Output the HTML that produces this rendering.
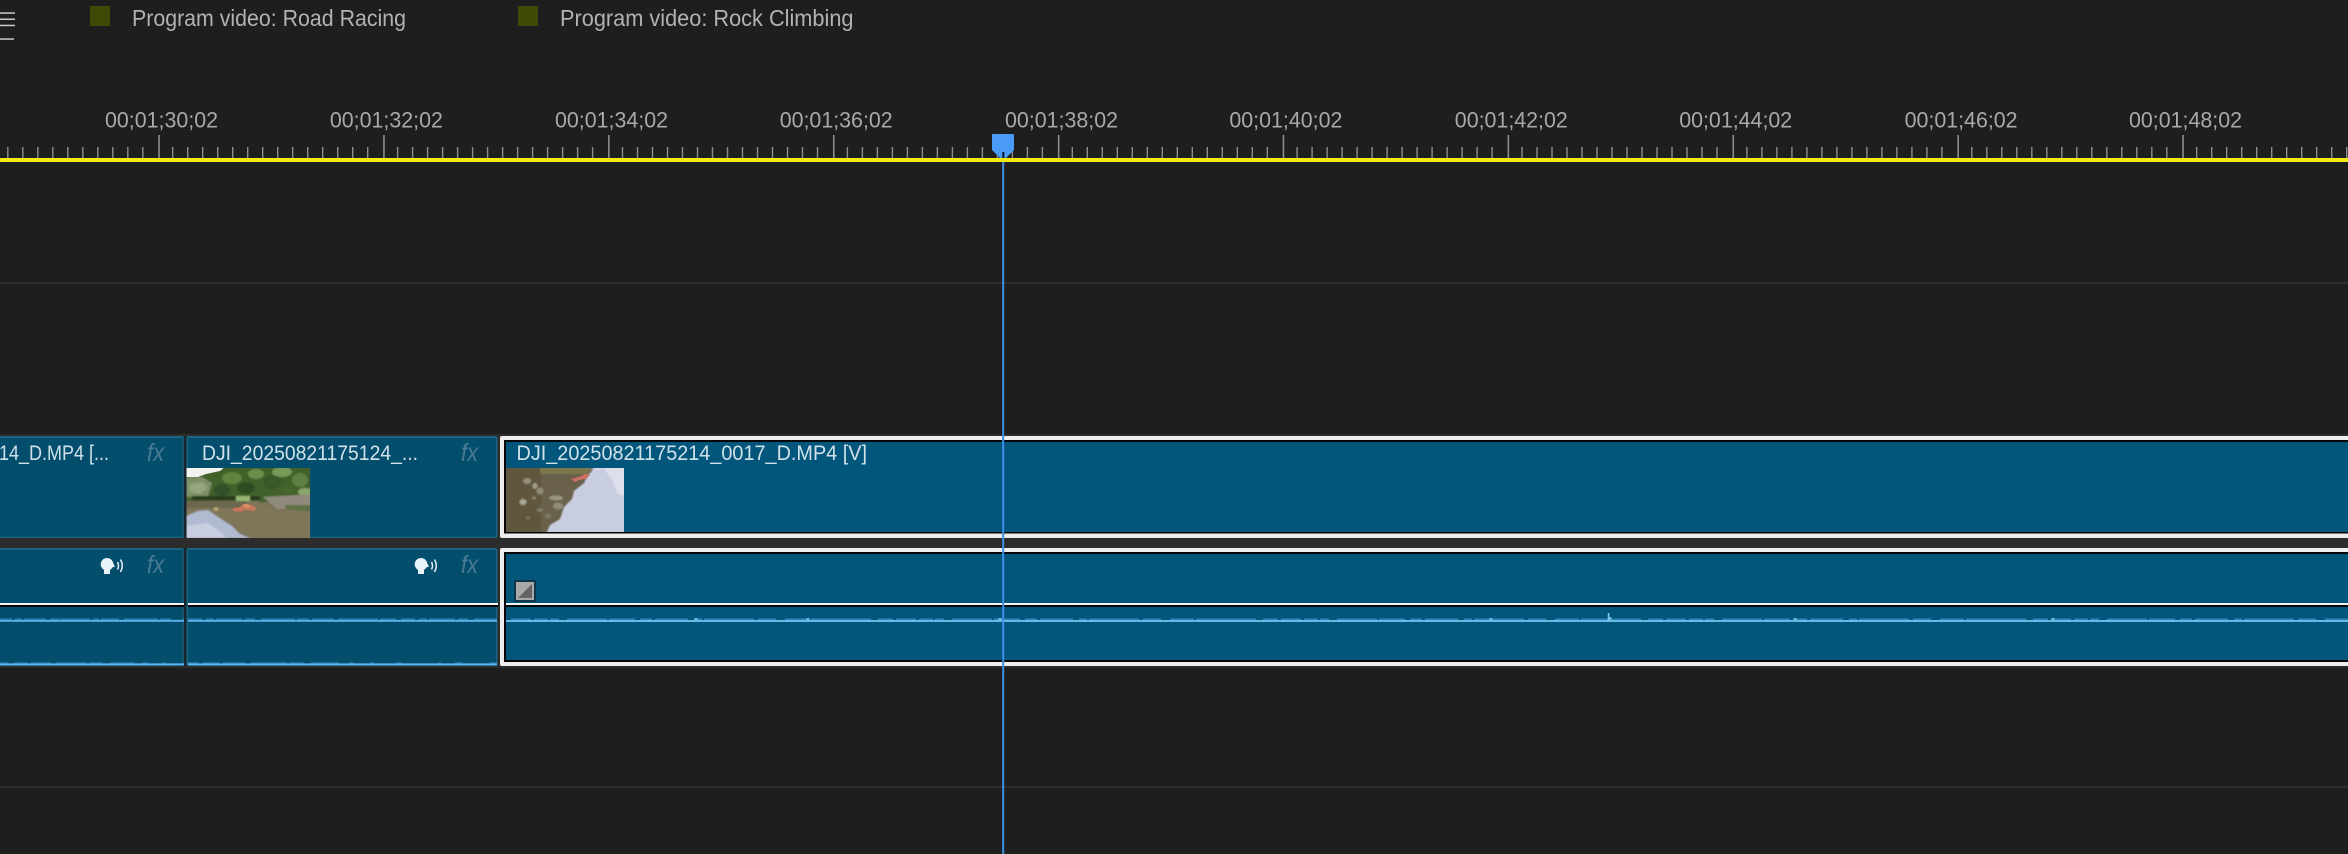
<!DOCTYPE html>
<html lang="en">
<head>
<meta charset="utf-8">
<title>Timeline</title>
<style>
html,body{margin:0;padding:0;background:#1e1e1e;width:2348px;height:854px;overflow:hidden}
svg{display:block}
text{font-family:"Liberation Sans",sans-serif}
.ruler{font-size:22px;fill:#a9a9a9}
.tab{font-size:23px;fill:#b2b2b2}
.clip{font-size:21px;fill:#d0e1ea}
.fx{font-style:italic;font-size:25px;fill:#4a7b93}
</style>
</head>
<body>
<svg width="2348" height="854" viewBox="0 0 2348 854" xmlns="http://www.w3.org/2000/svg">
<defs>
<g id="ticks" fill="#8d8d8d">
<rect x="-.75" y="135" width="1.600" height="23"/>
<rect x="13" y="147" width="1.400" height="11"/><rect x="28" y="147" width="1.400" height="11"/>
<rect x="43" y="147" width="1.400" height="11"/><rect x="58" y="147" width="1.400" height="11"/>
<rect x="73" y="147" width="1.400" height="11"/><rect x="88" y="147" width="1.400" height="11"/>
<rect x="103" y="147" width="1.400" height="11"/><rect x="118" y="147" width="1.400" height="11"/>
<rect x="133" y="147" width="1.400" height="11"/><rect x="148" y="147" width="1.400" height="11"/>
<rect x="163" y="147" width="1.400" height="11"/><rect x="178" y="147" width="1.400" height="11"/>
<rect x="193" y="147" width="1.400" height="11"/><rect x="208" y="147" width="1.400" height="11"/>
</g>
<g id="speaker">
<circle cx="6.500" cy="6.300" r="6.300" fill="#e8f3f7"/>
<path d="M3.500 10h6v6h-6zM12 4l2.500 4.500-3 1z" fill="#e8f3f7"/>
<path d="M17 4q2 3.800 0 7.500M20 1.500q3.600 6.200 0 12.500" fill="none" stroke="#e8f3f7" stroke-width="1.500"/>
</g>
<filter id="b1" x="-5%" y="-5%" width="110%" height="110%"><feGaussianBlur stdDeviation=".9"/></filter>
<clipPath id="t1"><rect x="186.500" y="468" width="123.500" height="70"/></clipPath>
<clipPath id="t2"><rect x="506" y="468" width="118" height="64"/></clipPath>
</defs>

<rect width="2348" height="854" fill="#1e1e1e"/>

<!-- top left menu -->
<rect x="0" y="12.300" width="15" height="1.500" fill="#c9c9c9"/>
<rect x="0" y="18.500" width="15" height="1.500" fill="#c9c9c9"/>
<rect x="0" y="24.700" width="15" height="1.500" fill="#c9c9c9"/>
<rect x="0" y="38.300" width="14" height="1.500" fill="#c9c9c9"/>

<!-- sequence tabs -->
<rect x="90" y="6" width="20" height="20" fill="#404a04"/>
<text class="tab" x="132" y="26" textLength="274" lengthAdjust="spacingAndGlyphs">Program video: Road Racing</text>
<rect x="518" y="6" width="20" height="20" fill="#404a04"/>
<text class="tab" x="560" y="26" textLength="293.500" lengthAdjust="spacingAndGlyphs">Program video: Rock Climbing</text>

<!-- ruler -->
<use href="#ticks" x="-65.900"/>
<use href="#ticks" x="159"/><use href="#ticks" x="383.900"/><use href="#ticks" x="608.800"/>
<use href="#ticks" x="833.700"/><use href="#ticks" x="1058.600"/><use href="#ticks" x="1283.400"/>
<use href="#ticks" x="1508.300"/><use href="#ticks" x="1733.200"/><use href="#ticks" x="1958.100"/>
<use href="#ticks" x="2183"/>

<text class="ruler" x="105" y="127.500" textLength="113" lengthAdjust="spacingAndGlyphs">00;01;30;02</text>
<text class="ruler" x="329.900" y="127.500" textLength="113" lengthAdjust="spacingAndGlyphs">00;01;32;02</text>
<text class="ruler" x="555" y="127.500" textLength="113" lengthAdjust="spacingAndGlyphs">00;01;34;02</text>
<text class="ruler" x="779.700" y="127.500" textLength="113" lengthAdjust="spacingAndGlyphs">00;01;36;02</text>
<text class="ruler" x="1005" y="127.500" textLength="113" lengthAdjust="spacingAndGlyphs">00;01;38;02</text>
<text class="ruler" x="1229.400" y="127.500" textLength="113" lengthAdjust="spacingAndGlyphs">00;01;40;02</text>
<text class="ruler" x="1454.800" y="127.500" textLength="113" lengthAdjust="spacingAndGlyphs">00;01;42;02</text>
<text class="ruler" x="1679.200" y="127.500" textLength="113" lengthAdjust="spacingAndGlyphs">00;01;44;02</text>
<text class="ruler" x="1904.600" y="127.500" textLength="113" lengthAdjust="spacingAndGlyphs">00;01;46;02</text>
<text class="ruler" x="2129" y="127.500" textLength="113" lengthAdjust="spacingAndGlyphs">00;01;48;02</text>

<!-- playhead head -->
<path d="M993 134h20a1 1 0 0 1 1 1v15l-8 8v2h-6v-2l-8-8v-15a1 1 0 0 1 1-1z" fill="#4a9bf6"/>
<rect x="1002.300" y="152" width="2" height="7" fill="#0c1420"/>
<!-- yellow work bar -->
<rect x="0" y="158" width="2348" height="4" fill="#f3ea10"/>

<!-- track separators -->
<rect x="0" y="282" width="2348" height="2" fill="#2e2e2e"/>
<rect x="0" y="786" width="2348" height="2" fill="#2e2e2e"/>

<!-- clip band -->
<rect x="0" y="434" width="2348" height="234" fill="#2c2c2c"/>

<!-- clip 1 video/audio -->
<rect x="-6" y="436" width="190" height="102" rx="2" fill="#1c6580"/>
<rect x="-6" y="438" width="188.500" height="98.500" fill="#034e6d"/>
<rect x="-6" y="548" width="190" height="118" rx="2" fill="#1c6580"/>
<rect x="-6" y="550" width="188.500" height="114.500" fill="#034e6d"/>
<rect x="183.700" y="436" width="3" height="102" fill="#16252d"/>
<rect x="183.700" y="548" width="3" height="118" fill="#16252d"/>

<!-- clip 2 video/audio -->
<rect x="186.500" y="436" width="311" height="102" rx="2" fill="#1c6580"/>
<rect x="188" y="438" width="308" height="98.500" fill="#034e6d"/>
<rect x="186.500" y="548" width="311" height="118" rx="2" fill="#1c6580"/>
<rect x="188" y="550" width="308" height="114.500" fill="#034e6d"/>

<!-- clip 3 selected -->
<rect x="500" y="436" width="1860" height="102" rx="2" fill="#eeeeee"/>
<rect x="504" y="440" width="1850" height="93.500" fill="#060606"/>
<rect x="506" y="442" width="1850" height="90" fill="#02567c"/>
<rect x="500" y="548" width="1860" height="118" rx="2" fill="#eeeeee"/>
<rect x="504" y="552" width="1850" height="110" fill="#060606"/>
<rect x="506" y="554" width="1850" height="106" fill="#02567c"/>

<!-- thumbnail clip 2 -->
<g clip-path="url(#t1)">
<rect x="186" y="468" width="125" height="70" fill="#7b7258"/>
<g filter="url(#b1)">
<rect x="180" y="466" width="135" height="36" fill="#43612c"/>
<path d="M180 477h22l10 6-4 14h-28z" fill="#7d8f66"/>
<path d="M190 484l12-2 6 6-8 6-10-2z" fill="#96a57c"/>
<ellipse cx="232" cy="478" rx="10" ry="6" fill="#5f8440"/>
<ellipse cx="222" cy="490" rx="8" ry="6" fill="#32502a"/>
<ellipse cx="246" cy="488" rx="9" ry="6" fill="#2f4d20"/>
<ellipse cx="256" cy="474" rx="8" ry="5" fill="#6b8f4b"/>
<ellipse cx="272" cy="482" rx="9" ry="7" fill="#37582a"/>
<ellipse cx="282" cy="472" rx="10" ry="5" fill="#799a58"/>
<ellipse cx="300" cy="480" rx="8" ry="7" fill="#5f8042"/>
<ellipse cx="305" cy="492" rx="7" ry="4" fill="#88a56c"/>
<ellipse cx="288" cy="490" rx="7" ry="4" fill="#46662f"/>
<rect x="192" y="496" width="68" height="4" fill="#2a3a1c"/>
<path d="M263 497l50-3v13l-36 2z" fill="#8f8a7b"/>
<path d="M285 505h30v6h-28z" fill="#5f7245"/>
<rect x="236" y="496" width="14" height="6" fill="#95b672"/>
<path d="M186 501h72l10 7 46 4v28H186z" fill="#7f7559"/>
<path d="M186 501h60v7h-60z" fill="#6c674e"/>
<path d="M186 538v-22l12-5 10-1 10 7 14 9 8 8 10 4z" fill="#b0bad0"/>
<path d="M186 538v-12l22-3 14 10 4 5z" fill="#c9cfe0"/>
<ellipse cx="216" cy="509" rx="2.500" ry="1.800" fill="#c0b070"/>
</g>
<path d="M180 466h46l-6 5-14 3-8 3h-18z" fill="#f3f4ef"/>
<path d="M233 508l7-1 4-3 8 1 5 3-3 3-8-1-6 2-7-1z" fill="#c5775c"/>
<path d="M241 505l6-1 4 2-4 2z" fill="#dd8f63"/>
</g>

<!-- thumbnail clip 3 -->
<g clip-path="url(#t2)">
<rect x="506" y="468" width="118" height="64" fill="#6a614a"/>
<g filter="url(#b1)">
<rect x="506" y="468" width="35" height="64" fill="#5f563e"/>
<path d="M540 466h55l-8 8h-47z" fill="#7b784e"/>
<path d="M594 466h32v68h-80l4-9 10-6 4-12 8-8 2-8 10-8 4-8 4-4z" fill="#c9cde0"/>
<path d="M592 470l12-2 8 12 6 14 8 2v-30h-26z" fill="#dde0ec"/>
<ellipse cx="527" cy="481" rx="4" ry="3" fill="#948f7c"/>
<ellipse cx="535" cy="486" rx="2.500" ry="3" fill="#a09c8a"/>
<ellipse cx="540" cy="491" rx="3.500" ry="3.500" fill="#8f8a76"/>
<ellipse cx="523" cy="502" rx="3.500" ry="3" fill="#aaa799"/>
<ellipse cx="534" cy="498" rx="2" ry="1.500" fill="#8d8875"/>
<ellipse cx="556" cy="498" rx="7" ry="2.500" fill="#9b9783"/>
<ellipse cx="558" cy="506" rx="5" ry="3.500" fill="#918d7a"/>
<ellipse cx="540" cy="510" rx="3" ry="2" fill="#827d68"/>
<ellipse cx="548" cy="516" rx="3" ry="2" fill="#827d68"/>
<ellipse cx="528" cy="518" rx="2" ry="1.500" fill="#7d7864"/>
</g>
<path d="M571 479l8-2 6-3 5 1-4 4-7 1-4 2z" fill="#cf6f62"/>
</g>

<!-- clip labels -->
<text class="clip" x="-1" y="460" textLength="110" lengthAdjust="spacingAndGlyphs">14_D.MP4 [...</text>
<text class="clip" x="202" y="460" textLength="216" lengthAdjust="spacingAndGlyphs">DJI_20250821175124_...</text>
<text class="clip" x="516.500" y="460" textLength="350.500" lengthAdjust="spacingAndGlyphs">DJI_20250821175214_0017_D.MP4 [V]</text>

<!-- fx -->
<text class="fx" x="147" y="461" textLength="17" lengthAdjust="spacingAndGlyphs">fx</text>
<text class="fx" x="461" y="461" textLength="17" lengthAdjust="spacingAndGlyphs">fx</text>
<text class="fx" x="147" y="573" textLength="17" lengthAdjust="spacingAndGlyphs">fx</text>
<text class="fx" x="461" y="573" textLength="17" lengthAdjust="spacingAndGlyphs">fx</text>

<!-- speaker icons -->
<use href="#speaker" x="100.500" y="558"/>
<use href="#speaker" x="414.500" y="558"/>

<!-- keyframe icon -->
<rect x="514" y="580" width="22" height="22" rx="2" fill="#123649"/>
<rect x="516" y="582" width="18" height="18" fill="#a9a9a9"/>
<path d="M518 598h14v-14z" fill="#646464"/>

<!-- audio divider -->
<rect x="0" y="603" width="184" height="2" fill="#f2f2f2"/><rect x="0" y="605" width="184" height="2" fill="#050505"/>
<rect x="188" y="603" width="310" height="2" fill="#f2f2f2"/><rect x="188" y="605" width="310" height="2" fill="#050505"/>
<rect x="506" y="603" width="1842" height="2" fill="#f2f2f2"/><rect x="506" y="605" width="1842" height="2" fill="#050505"/>

<!-- waveforms: unselected -->
<g fill="none">
<line x1="0" y1="619" x2="184" y2="619" stroke="#2a7aa8" stroke-width="1.500" stroke-dasharray="12 3 7 2 22 4 9 1 30 3 6 2 18 5 34 2 11"/>
<line x1="0" y1="620.800" x2="184" y2="620.800" stroke="#5cb5ee" stroke-width="1.800"/>
<line x1="188" y1="619" x2="497" y2="619" stroke="#2a7aa8" stroke-width="1.500" stroke-dasharray="14 4 8 2 26 3 10 6 34 2 12 3 22 4 40 2 16 5"/>
<line x1="188" y1="620.800" x2="497" y2="620.800" stroke="#5cb5ee" stroke-width="1.800"/>
<line x1="0" y1="662.800" x2="184" y2="662.800" stroke="#2a7aa8" stroke-width="1.200" stroke-dasharray="8 6 14 3 20 5 30 4 12 8 24"/>
<line x1="0" y1="664.300" x2="184" y2="664.300" stroke="#5cb5ee" stroke-width="1.800"/>
<line x1="188" y1="662.800" x2="497" y2="662.800" stroke="#2a7aa8" stroke-width="1.200" stroke-dasharray="10 5 16 4 22 6 36 3 14 7 28"/>
<line x1="188" y1="664.300" x2="497" y2="664.300" stroke="#5cb5ee" stroke-width="1.800"/>
<!-- selected -->
<line x1="511" y1="619.300" x2="2348" y2="619.300" stroke="#2f86b4" stroke-width="1.500" stroke-dasharray="20 3 14 2 9 8 40 2 26 5 12 3 33 6 8 2 50 4 18 9 24 2 60 7 15 3"/>
<line x1="506" y1="621" x2="2348" y2="621" stroke="#74c6f6" stroke-width="1.800"/>
<path d="M696 621v-3M808 621v-3M1000 621v-3M1491 621v-3M1795 621v-3M2053 621v-3" stroke="#6fb9e2" stroke-width="3"/>
<path d="M1608.500 621v-8" stroke="#8fd2f8" stroke-width="1.500"/>
<path d="M1610 621v-4" stroke="#6fb9e2" stroke-width="3"/>
</g>

<!-- playhead line -->
<rect x="1002.200" y="162" width="2" height="692" fill="#3d8fe9"/>
</svg>
</body>
</html>
